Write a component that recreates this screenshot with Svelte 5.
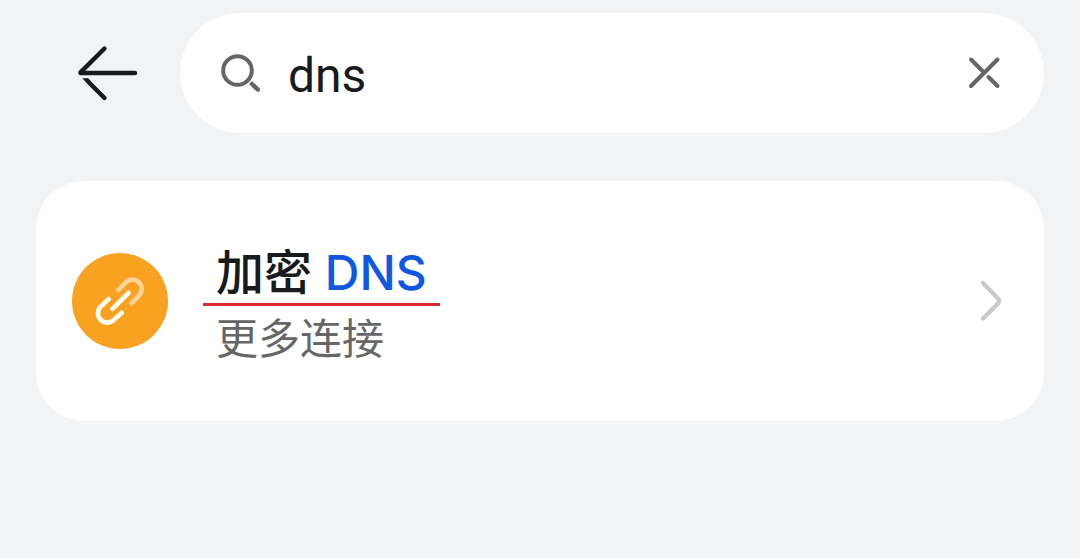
<script>
  let query = $state('dns')
  let input

  const results = [
    { id: 'private-dns', title: '加密 DNS', path: '更多连接' }
  ]

  // split the title so that the part matching the query can be coloured
  const split = (title, text) => {
    const needle = text.trim().toLowerCase()
    const start = needle ? title.toLowerCase().indexOf(needle) : -1
    if (start < 0) return [title, '', '']

    const end = start + needle.length
    return [title.slice(0, start), title.slice(start, end), title.slice(end)]
  }

  const clear = () => {
    query = ''
    input.focus()
  }
</script>

<main class="page">
  <header class="header">
    <button class="back" type="button" aria-label="返回">
      <svg width="72" height="72" viewBox="0 0 72 72" fill="none" stroke="#191a1c" stroke-width="4.4" stroke-linecap="round" stroke-linejoin="round">
        <path d="M32.5 11.5 8.5 35.4V36H63" />
        <path d="M17.5 46 32.5 61" />
        <path d="M10.3 41.2H16.2L19.2 44.5 16 47.6z" fill="#191a1c" stroke="none" />
      </svg>
    </button>
    <form class="search" role="search" onsubmit={(e) => e.preventDefault()}>
      <svg width="48" height="48" viewBox="0 0 48 48" fill="none" stroke="#666" stroke-width="4" aria-hidden="true">
        <circle cx="21.5" cy="21.5" r="14.3" />
        <path d="M34.5 33.5 42 40.8" stroke-linecap="butt" />
        <path d="M37 36 42 40.8" stroke-linecap="round" />
      </svg>
      <input class="search__input" type="text" aria-label="搜索" bind:this={input} bind:value={query} />
      <button class="search__clear" type="button" aria-label="清除" onclick={clear}>
        <svg width="48" height="48" viewBox="0 0 48 48" fill="none" stroke="#666" stroke-width="4" stroke-linecap="round">
          <path d="M37.5 10.5 11 37" />
          <path d="M11 10.5 24 23.5" />
          <path d="M28.5 28 37.5 37" />
        </svg>
      </button>
    </form>
  </header>

  <ul class="results">
    {#each results as result (result.id)}
      {@const [before, match, after] = split(result.title, query)}
      <li>
        <a class="result" href="#{result.id}">
          <svg class="result__icon" width="96" height="96" viewBox="0 0 96 96" fill="none" stroke-width="4.6" stroke-linecap="round" aria-hidden="true">
            <circle cx="48" cy="48" r="48" fill="#f9a120" />
            <path d="M46.5 37 53.9 29.2A9.3 9.3 0 0 1 67.1 42.3L59.7 50.3" stroke="#fdd49a" />
            <path d="M56.5 40 40.5 55.8" stroke="#fffdf0" />
            <path d="M36.7 46 28.7 53.7A9.3 9.3 0 0 0 41.9 66.9L49.8 59.7" stroke="#fffdf0" />
          </svg>
          <span class="result__text">
            <span class="result__title">{before}<mark>{match}</mark>{after}</span>
            <span class="result__path">{result.path}</span>
          </span>
          <svg width="24" height="48" viewBox="0 0 24 48" fill="none" stroke="#c9c9c9" stroke-width="4.4" stroke-linecap="round" stroke-linejoin="round" aria-hidden="true">
            <path d="M3 6 17.5 21Q20.5 24 17.5 27L3 41.5" />
          </svg>
        </a>
      </li>
    {/each}
  </ul>
</main>

<style>
  :global(body) {
    margin: 0;
    background: #f1f3f5;
  }

  .page {
    padding: 13px 36px;
    font-family: Inter, "Noto Sans CJK SC", sans-serif;
    color: #191a1c;
  }

  .header {
    display: flex;
    align-items: center;
    margin-bottom: 48px;
  }

  button {
    display: flex;
    padding: 0;
    border: 0;
    background: none;
    cursor: pointer;
  }

  .back {
    flex: none;
    margin: 0 36px;
  }

  .search {
    display: flex;
    flex: 1;
    align-items: center;
    min-width: 0;
    height: 120px;
    padding: 0 36px;
    box-sizing: border-box;
    border-radius: 60px;
    background: #fff;
  }

  .search svg {
    flex: none;
  }

  .search__input {
    flex: 1;
    min-width: 0;
    height: 72px;
    margin: 6px 24px 0;
    padding: 0;
    border: 0;
    outline: 0;
    background: none;
    color: inherit;
    font: 400 48px/72px Roboto, "Noto Sans CJK SC", sans-serif;
  }

  .results {
    margin: 0;
    padding: 0;
    border-radius: 48px;
    background: #fff;
    list-style: none;
  }

  .result {
    display: flex;
    align-items: center;
    padding: 60px 40px 60px 36px;
    color: inherit;
    text-decoration: none;
  }

  .result svg {
    flex: none;
  }

  .result__text {
    display: flex;
    flex: 1;
    flex-direction: column;
    align-items: flex-start;
    min-width: 0;
    margin-left: 35px;
  }

  .result__title {
    padding: 2px 13px 0;
    border-bottom: 3px solid #dc2832;
    font-size: 48px;
    font-weight: 500;
    line-height: 60px;
  }

  .result__title mark {
    background: none;
    color: #1158e0;
  }

  .result__path {
    padding: 10px 13px 0;
    color: #666;
    font-size: 42px;
    line-height: 45px;
  }
</style>
